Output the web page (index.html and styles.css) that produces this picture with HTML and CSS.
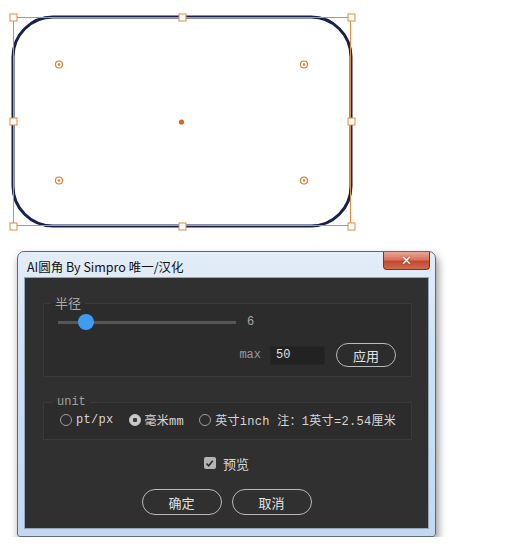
FILE: index.html
```html
<!DOCTYPE html>
<html lang="zh-CN">
<head>
    <meta charset="UTF-8">
    <meta name="viewport" content="width=device-width, initial-scale=1.0">
    <title>AI圆角 By Simpro</title>
    <link rel="stylesheet" href="styles.css">
</head>
<body>

    <div class="artboard">
        <svg width="370" height="240" viewBox="0 0 370 240">
            <rect x="13" y="17" width="338" height="209" rx="40" ry="40" fill="#fff" stroke="#16214c" stroke-width="3"/>
            <rect x="13.5" y="17.5" width="337" height="208" fill="none" stroke="#df8a45" stroke-width="1"/>
            <g fill="#fff" stroke="#df8a45" stroke-width="1">
                <rect x="10" y="14" width="7" height="7"/>
                <rect x="179" y="14" width="7" height="7"/>
                <rect x="348" y="14" width="7" height="7"/>
                <rect x="10" y="118" width="7" height="7"/>
                <rect x="348" y="118" width="7" height="7"/>
                <rect x="10" y="223" width="7" height="7"/>
                <rect x="179" y="223" width="7" height="7"/>
                <rect x="348" y="223" width="7" height="7"/>
            </g>
            <g fill="#fff" stroke="#e07a2a" stroke-width="1.2">
                <circle cx="59" cy="64.5" r="3.5"/>
                <circle cx="304" cy="64.5" r="3.5"/>
                <circle cx="59" cy="180.5" r="3.5"/>
                <circle cx="304" cy="180.5" r="3.5"/>
            </g>
            <g fill="#e07a2a">
                <circle cx="59" cy="64.5" r="1.2"/>
                <circle cx="304" cy="64.5" r="1.2"/>
                <circle cx="59" cy="180.5" r="1.2"/>
                <circle cx="304" cy="180.5" r="1.2"/>
                <circle cx="181.5" cy="122" r="2.6" fill="#e0602a"/>
            </g>
        </svg>
    </div>

    <div class="window">
        <div class="titlebar">
            <span class="title">AI圆角 By Simpro 唯一/汉化</span>
            <span class="close">&#x2715;</span>
        </div>
        <div class="frame">
            <div class="panel">
                <fieldset class="group radius-group">
                    <legend>半径</legend>
                    <div class="slider-row">
                        <div class="track">
                            <span class="thumb"></span>
                        </div>
                        <span class="value">6</span>
                    </div>
                    <div class="max-row">
                        <span class="mono">max</span>
                        <span class="field">50</span>
                        <span class="pill small">应用</span>
                    </div>
                </fieldset>

                <fieldset class="group unit-group">
                    <legend class="mono">unit</legend>
                    <div class="radio-row">
                        <span class="radio"></span><span class="option">pt/px</span>
                        <span class="radio checked"></span><span class="option">毫米mm</span>
                        <span class="radio"></span><span class="option">英寸inch 注：1英寸=2.54厘米</span>
                    </div>
                </fieldset>

                <div class="preview-row">
                    <span class="checkbox">
                        <svg width="9" height="9" viewBox="0 0 9 9"><path d="M1.5 4.5 L3.7 6.8 L7.8 1.8" fill="none" stroke="#2a2a2a" stroke-width="1.6"/></svg>
                    </span>
                    <span class="option">预览</span>
                </div>

                <div class="button-row">
                    <span class="pill">确定</span>
                    <span class="pill">取消</span>
                </div>
            </div>
        </div>
    </div>

</body>
</html>
```

FILE: styles.css
```css
* {
    margin: 0;
    padding: 0;
    box-sizing: border-box;
}
body {
    background-color: #fff;
    font-family: "Liberation Mono", "Noto Sans CJK SC", monospace;
}
.artboard {
    height: 240px;
}
.artboard svg {
    display: block;
}
.window {
    width: 419px;
    height: 286px;
    margin: 11px 0 0 17px;
    border: 1px solid #5c6a78;
    border-radius: 7px 7px 3px 3px;
    background: linear-gradient(180deg, #e3edf8 0%, #cfe0f2 40%, #c3d8ef 100%);
    box-shadow: 2px 5px 9px rgba(0, 0, 0, 0.45);
}
.titlebar {
    height: 25px;
    display: flex;
    align-items: center;
    justify-content: space-between;
    padding: 0 5px 0 9px;
}
.title {
    font-family: "Noto Sans CJK SC", sans-serif;
    font-size: 12.5px;
    color: #111;
    margin-top: 3px;
}
.close {
    align-self: flex-start;
    width: 47px;
    height: 18px;
    background: linear-gradient(180deg, #e9a797 0%, #d9735c 45%, #c24a30 55%, #cf6a4c 100%);
    border: 1px solid #7a3426;
    border-top: none;
    border-radius: 0 0 4px 4px;
    color: #fff;
    font-family: "DejaVu Sans", sans-serif;
    font-weight: bold;
    font-size: 13px;
    text-align: center;
    line-height: 17px;
    text-shadow: 0 0 2px #7a2a1a;
}
.frame {
    padding: 0 6px 7px 6px;
}
.panel {
    height: 252px;
    background-color: #303030;
    border: 1px solid #8fa7bf;
    padding-top: 17px;
}
.group {
    margin: 0 16px 0 18px;
    border: 1px solid #3a3a3a;
    background-color: #2c2c2c;
    padding: 0 14px 8px 14px;
    min-width: 0;
}
.group legend {
    margin-left: -7px;
    padding: 0 4px;
    font-family: "Noto Sans CJK SC", sans-serif;
    font-size: 13px;
    line-height: 16px;
    color: #a9a9a9;
}
.group legend.mono {
    font-family: "Liberation Mono", monospace;
    font-size: 12px;
    color: #a0a0a0;
}
.radius-group {
    height: 82px;
}
.slider-row {
    height: 22px;
    display: flex;
    align-items: center;
}
.track {
    position: relative;
    width: 178px;
    height: 3px;
    background-color: #565656;
}
.thumb {
    position: absolute;
    left: 20px;
    top: -7px;
    width: 16px;
    height: 16px;
    border-radius: 50%;
    background-color: #3f9cf2;
}
.value {
    margin-left: 11px;
    font-size: 12px;
    color: #a8a8a8;
}
.max-row {
    margin-top: 10px;
    height: 24px;
    display: flex;
    align-items: center;
    justify-content: flex-end;
    padding-right: 1px;
}
.mono {
    font-family: "Liberation Mono", monospace;
    font-size: 12px;
    color: #9a9a9a;
}
.field {
    margin-left: 9px;
    width: 55px;
    height: 19px;
    background-color: #222;
    border: 1px solid #262626;
    color: #e0e0e0;
    font-size: 12px;
    line-height: 17px;
    padding-left: 5px;
}
.pill {
    width: 80px;
    height: 26px;
    border: 1px solid #b9b9b9;
    border-radius: 13px;
    color: #e2e2e2;
    font-family: "Noto Sans CJK SC", sans-serif;
    font-size: 13px;
    display: flex;
    align-items: center;
    justify-content: center;
}
.pill.small {
    margin-left: 11px;
    width: 60px;
    height: 24px;
    border-radius: 12px;
}
.unit-group {
    margin-top: 17px;
    height: 46px;
    padding-left: 16px;
}
.radio-row {
    height: 20px;
    display: flex;
    align-items: center;
}
.radio {
    width: 12px;
    height: 12px;
    border-radius: 50%;
    border: 1px solid #9c9c9c;
    margin-right: 4px;
    flex-shrink: 0;
}
.radio.checked {
    border-color: #c8c8c8;
    background: radial-gradient(circle, #3a3a3a 0 2px, #c9c9c9 2.5px);
}
.option {
    font-size: 12px;
    color: #d6d6d6;
    white-space: nowrap;
}
.radio-row .option {
    margin-right: 15px;
    letter-spacing: 0.3px;
}
.radio-row .option:last-child {
    margin-right: 0;
}
.preview-row {
    margin-top: 15px;
    height: 16px;
    display: flex;
    align-items: center;
    justify-content: center;
    gap: 7px;
}
.checkbox {
    width: 12px;
    height: 12px;
    border-radius: 2px;
    background-color: #b4b4b4;
    display: flex;
    align-items: center;
    justify-content: center;
}
.checkbox svg {
    display: block;
}
.preview-row .option {
    font-family: "Noto Sans CJK SC", sans-serif;
    font-size: 13px;
}
.button-row {
    margin-top: 18px;
    display: flex;
    justify-content: center;
    gap: 10px;
}
```
